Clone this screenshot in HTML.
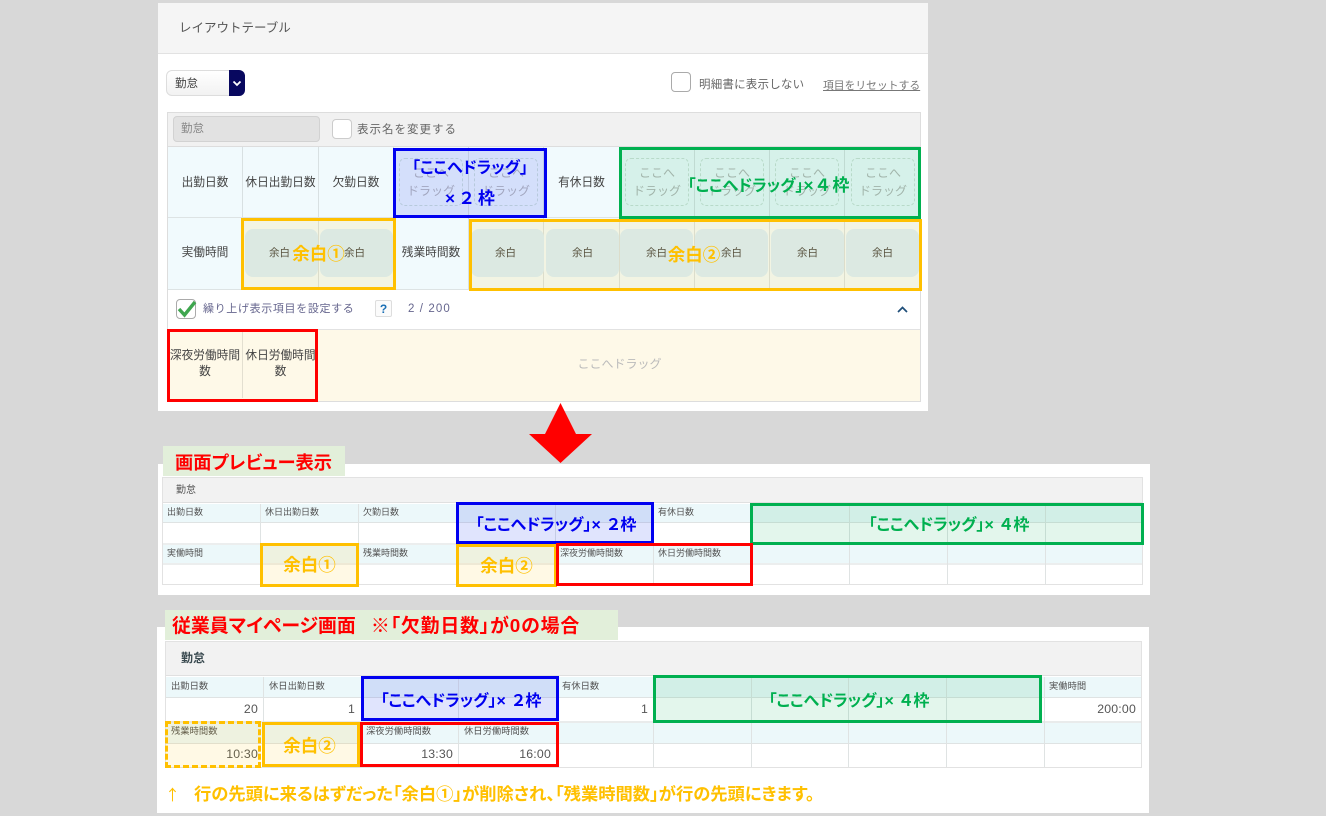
<!DOCTYPE html>
<html lang="ja"><head><meta charset="utf-8"><title>レイアウトテーブル</title>
<style>
html,body{margin:0;padding:0}
body{width:1326px;height:816px;background:#d8d8d8;position:relative;overflow:hidden;font-family:"Liberation Sans","Noto Sans CJK JP",sans-serif;font-size:11.7px;color:#444}
div{position:absolute;box-sizing:border-box}
.c{display:flex;align-items:center;justify-content:center;text-align:center;white-space:nowrap}
.t{white-space:nowrap;line-height:16px}
.cell{background:#f1fafd;border-right:1px solid #d8e0e2;border-bottom:1px solid #dde3e4;color:#444}
.r1{padding-bottom:2px}
.r2{padding-bottom:4px}
.drop{border:1px dashed #cfe0d8;border-radius:6px;color:#b5b5b5;line-height:18px;font-size:12px}
.blank{background:#d8eefc;border-radius:8px;color:#444;font-size:10.5px}
.o{border-style:solid;border-width:3px;display:flex;align-items:center;justify-content:center;font-weight:bold;white-space:nowrap;font-feature-settings:"palt"}
.bl{border-color:#0000f0;color:#0000f0;background:rgba(60,90,240,.16);font-size:16px}
.gr{border-color:#00b050;color:#00b050;background:rgba(0,176,80,.11);font-size:16px}
.ye{border-color:#ffc000;color:#ffc000;background:rgba(255,192,0,.1);font-size:17.5px}
.re{border-color:#f00}
.h{background:#ecf8fa}
.ln{background:#dfe3e3}
.lab{color:#555;font-size:9px;line-height:14px;white-space:nowrap}
.lab3{color:#555;font-size:9.3px;line-height:14px;white-space:nowrap}
.val{color:#555;font-size:12.3px;line-height:14px;text-align:right;white-space:nowrap;letter-spacing:.2px}
.tail{letter-spacing:1px}
</style></head><body>

<!-- panel 1 -->
<div style="left:158px;top:3px;width:770px;height:408px;background:#fff"></div>
<div style="left:158px;top:3px;width:770px;height:51px;background:#f5f5f5;border-bottom:1px solid #e2e2e2"></div>
<div class="t" style="left:179px;top:20px;font-size:12.5px;color:#555">レイアウトテーブル</div>

<div style="left:166px;top:70px;width:79px;height:26px;background:linear-gradient(#fff,#f2f2f2);border:1px solid #ddd;border-radius:6px"></div>
<div class="t" style="left:175px;top:76px;font-size:11.5px;color:#444">勤怠</div>
<div style="left:229px;top:70px;width:16px;height:26px;background:#08085f;border-radius:0 6px 6px 0"></div>
<svg style="position:absolute;left:232px;top:80px" width="10" height="7"><path d="M1.5 1.5L5 5L8.5 1.5" fill="none" stroke="#fff" stroke-width="1.8"/></svg>

<div style="left:671px;top:72px;width:20px;height:20px;background:#fff;border:1px solid #aaa;border-radius:4px"></div>
<div class="t" style="left:699px;top:77px;font-size:11.5px;color:#666;letter-spacing:.2px">明細書に表示しない</div>
<div class="t" style="left:823px;top:78px;font-size:10.8px;color:#777;text-decoration:underline">項目をリセットする</div>

<!-- config table -->
<div style="left:167px;top:112px;width:754px;height:290px;border:1px solid #ddd;background:#fff"></div>
<div style="left:168px;top:113px;width:752px;height:34px;background:#f1f1f1;border-bottom:1px solid #ddd"></div>
<div style="left:173px;top:116px;width:147px;height:26px;background:#e2e2e2;border:1px solid #d2d2d2;border-radius:4px"></div>
<div class="t" style="left:181px;top:121px;font-size:11.5px;color:#888">勤怠</div>
<div style="left:332px;top:119px;width:20px;height:20px;background:#fff;border:1px solid #ccc;border-radius:4px"></div>
<div class="t" style="left:357px;top:122px;font-size:11.5px;color:#666;letter-spacing:1px">表示名を変更する</div>

<!-- row 1 -->
<div class="cell c r1" style="left:168px;top:147px;width:75px;height:71px">出勤日数</div>
<div class="cell c r1" style="left:243px;top:147px;width:76px;height:71px">休日出勤日数</div>
<div class="cell c r1" style="left:319px;top:147px;width:75px;height:71px">欠勤日数</div>
<div class="cell" style="left:394px;top:147px;width:75px;height:71px"></div>
<div class="cell" style="left:469px;top:147px;width:75px;height:71px"></div>
<div class="cell c r1" style="left:544px;top:147px;width:76px;height:71px">有休日数</div>
<div class="cell" style="left:620px;top:147px;width:75px;height:71px"></div>
<div class="cell" style="left:695px;top:147px;width:75px;height:71px"></div>
<div class="cell" style="left:770px;top:147px;width:75px;height:71px"></div>
<div class="cell" style="left:845px;top:147px;width:75px;height:71px"></div>
<div class="drop c" style="left:399px;top:158px;width:64px;height:48px">ここへ<br>ドラッグ</div>
<div class="drop c" style="left:474px;top:158px;width:64px;height:48px">ここへ<br>ドラッグ</div>
<div class="drop c" style="left:625px;top:158px;width:64px;height:48px">ここへ<br>ドラッグ</div>
<div class="drop c" style="left:700px;top:158px;width:64px;height:48px">ここへ<br>ドラッグ</div>
<div class="drop c" style="left:775px;top:158px;width:64px;height:48px">ここへ<br>ドラッグ</div>
<div class="drop c" style="left:851px;top:158px;width:64px;height:48px">ここへ<br>ドラッグ</div>

<!-- row 2 -->
<div class="cell c r2" style="left:168px;top:218px;width:75px;height:72px">実働時間</div>
<div class="cell" style="left:243px;top:218px;width:76px;height:72px"></div>
<div class="cell" style="left:319px;top:218px;width:75px;height:72px"></div>
<div class="cell c r2" style="left:394px;top:218px;width:75px;height:72px">残業時間数</div>
<div class="cell" style="left:469px;top:218px;width:75px;height:72px"></div>
<div class="cell" style="left:544px;top:218px;width:76px;height:72px"></div>
<div class="cell" style="left:620px;top:218px;width:75px;height:72px"></div>
<div class="cell" style="left:695px;top:218px;width:75px;height:72px"></div>
<div class="cell" style="left:770px;top:218px;width:75px;height:72px"></div>
<div class="cell" style="left:845px;top:218px;width:75px;height:72px"></div>
<div class="blank c" style="left:245px;top:229px;width:73px;height:48px;padding:0 4px 2px 0">余白</div>
<div class="blank c" style="left:320px;top:229px;width:73px;height:48px;padding:0 4px 2px 0">余白</div>
<div class="blank c" style="left:471px;top:229px;width:73px;height:48px;padding:0 4px 2px 0">余白</div>
<div class="blank c" style="left:546px;top:229px;width:73px;height:48px;padding:0 0 2px 0">余白</div>
<div class="blank c" style="left:620px;top:229px;width:73px;height:48px;padding:0 0 2px 0">余白</div>
<div class="blank c" style="left:695px;top:229px;width:73px;height:48px;padding:0 0 2px 0">余白</div>
<div class="blank c" style="left:771px;top:229px;width:73px;height:48px;padding:0 0 2px 0">余白</div>
<div class="blank c" style="left:846px;top:229px;width:73px;height:48px;padding:0 0 2px 0">余白</div>

<!-- check row -->
<div style="left:176px;top:299px;width:20px;height:20px;background:#fff;border:1px solid #aaa;border-radius:4px"></div>
<svg style="position:absolute;left:176px;top:298px" width="22" height="22"><path d="M3 11L8.5 17L19 4" fill="none" stroke="#3fa64f" stroke-width="3.4"/></svg>
<div class="t" style="left:203px;top:301px;font-size:11px;color:#66668e;letter-spacing:.65px">繰り上げ表示項目を設定する</div>
<div class="c" style="left:375px;top:300px;width:17px;height:17px;border:1px solid #ddd;border-radius:2px;background:#fbfbfb;color:#1a6fb5;font-weight:bold;font-size:12px">?</div>
<div class="t" style="left:408px;top:301px;font-size:11.5px;color:#66668e;letter-spacing:1.1px">2 / 200</div>
<svg style="position:absolute;left:896px;top:305px" width="13" height="9"><path d="M2 7L6.5 2.5L11 7" fill="none" stroke="#1f4e79" stroke-width="1.7"/></svg>

<!-- bottom row -->
<div style="left:168px;top:329px;width:752px;height:72px;background:#fef9e8;border-top:1px solid #e2e2e2"></div>
<div class="c" style="left:168px;top:330px;width:75px;height:68px;border-right:1px solid #e3dfd0;line-height:16px;color:#444">深夜労働時間<br>数</div>
<div class="c" style="left:243px;top:330px;width:75px;height:68px;line-height:16px;color:#444">休日労働時間<br>数</div>
<div class="c" style="left:319px;top:330px;width:601px;height:66px;color:#bbb;font-size:12px">ここへドラッグ</div>

<!-- overlays panel 1 -->
<div class="o bl" style="left:393px;top:148px;width:154px;height:70px;line-height:30px;text-align:center;padding-top:2px"><span>「ここへドラッグ」<br><span style="font-size:17px;letter-spacing:5px;margin-left:5px">×２枠</span></span></div>
<div class="o gr" style="left:619px;top:147px;width:302px;height:72px"><span>「ここへドラッグ」<span style="font-size:17px;letter-spacing:3px">×４枠</span></span></div>
<div class="o ye" style="left:241px;top:218px;width:155px;height:72px;padding-bottom:1px">余白①</div>
<div class="o ye" style="left:469px;top:219px;width:453px;height:72px;padding-bottom:2px"><span style="margin-left:-3px">余白②</span></div>
<div class="o re" style="left:167px;top:329px;width:151px;height:73px"></div>

<!-- arrow -->
<svg style="position:absolute;left:525px;top:400px" width="72" height="66"><polygon points="35.5,3 51,34 67,34 35.5,63 4,34 20,34" fill="#f00"/></svg>

<!-- panel 2 -->
<div style="left:158px;top:464px;width:992px;height:131px;background:#fff"></div>
<div style="left:163px;top:446px;width:182px;height:30px;background:#e2efda"></div>
<div class="t" style="left:175px;top:453px;font-size:18.3px;line-height:20px;font-weight:bold;color:#f00;font-feature-settings:'palt'">画面プレビュー表示</div>

<div style="left:162px;top:477px;width:981px;height:108px;border:1px solid #e2e2e2;background:#fff"></div>
<div style="left:163px;top:478px;width:979px;height:25px;background:#f2f2f2;border-bottom:1px solid #e0e0e0"></div>
<div class="t" style="left:176px;top:485px;font-size:10px;line-height:12px;color:#555">勤怠</div>
<div class="h" style="left:163px;top:504px;width:979px;height:19px"></div>
<div class="h" style="left:163px;top:545px;width:979px;height:18px"></div>
<div class="ln" style="left:163px;top:522px;width:979px;height:1px"></div>
<div class="ln" style="left:163px;top:543px;width:979px;height:2px;opacity:.6"></div>
<div class="ln" style="left:163px;top:563px;width:979px;height:2px;opacity:.6"></div>
<div class="ln" style="left:260px;top:504px;width:1px;height:80px"></div>
<div class="ln" style="left:358px;top:504px;width:1px;height:80px"></div>
<div class="ln" style="left:456px;top:504px;width:1px;height:80px"></div>
<div class="ln" style="left:555px;top:504px;width:1px;height:80px"></div>
<div class="ln" style="left:653px;top:504px;width:1px;height:80px"></div>
<div class="ln" style="left:849px;top:504px;width:1px;height:80px"></div>
<div class="ln" style="left:947px;top:504px;width:1px;height:80px"></div>
<div class="ln" style="left:1045px;top:504px;width:1px;height:80px"></div>
<div class="lab" style="left:167px;top:505px">出勤日数</div>
<div class="lab" style="left:265px;top:505px">休日出勤日数</div>
<div class="lab" style="left:363px;top:505px">欠勤日数</div>
<div class="lab" style="left:658px;top:505px">有休日数</div>
<div class="lab" style="left:167px;top:546px">実働時間</div>
<div class="lab" style="left:363px;top:546px">残業時間数</div>
<div class="lab" style="left:560px;top:546px">深夜労働時間数</div>
<div class="lab" style="left:658px;top:546px">休日労働時間数</div>
<div class="o bl" style="left:456px;top:502px;width:198px;height:42px;padding:0 0 1px 3px"><span>「ここへドラッグ」<span class="tail">× ２枠</span></span></div>
<div class="o gr" style="left:750px;top:503px;width:394px;height:42px;padding:0 0 2px 5px"><span>「ここへドラッグ」<span class="tail">× ４枠</span></span></div>
<div class="o ye" style="left:260px;top:543px;width:99px;height:44px;padding-bottom:1px">余白①</div>
<div class="o ye" style="left:456px;top:544px;width:101px;height:43px;padding-bottom:1px">余白②</div>
<div class="o re" style="left:556px;top:543px;width:197px;height:43px"></div>

<!-- panel 3 -->
<div style="left:157px;top:627px;width:992px;height:186px;background:#fff"></div>
<div style="left:165px;top:610px;width:453px;height:30px;background:#e2efda"></div>
<div class="t" style="left:172px;top:616px;font-size:18.9px;line-height:21px;font-weight:bold;color:#f00;font-feature-settings:'palt'">従業員マイページ画面<span style="margin-left:15px;letter-spacing:.85px">※「欠勤日数」が0の場合</span></div>

<div style="left:165px;top:641px;width:977px;height:127px;border:1px solid #e2e2e2;background:#fff"></div>
<div style="left:166px;top:642px;width:975px;height:34px;background:#f2f2f2;border-bottom:1px solid #e0e0e0"></div>
<div class="t" style="left:181px;top:650px;font-size:12px;font-weight:bold;color:#3a4a50">勤怠</div>
<div class="h" style="left:166px;top:677px;width:975px;height:20px"></div>
<div class="h" style="left:166px;top:723px;width:975px;height:20px"></div>
<div class="ln" style="left:166px;top:697px;width:975px;height:1px"></div>
<div class="ln" style="left:166px;top:721px;width:975px;height:2px;opacity:.7"></div>
<div class="ln" style="left:166px;top:743px;width:975px;height:1px"></div>
<div class="ln" style="left:263px;top:677px;width:1px;height:90px"></div>
<div class="ln" style="left:361px;top:677px;width:1px;height:90px"></div>
<div class="ln" style="left:458px;top:677px;width:1px;height:90px"></div>
<div class="ln" style="left:557px;top:677px;width:1px;height:90px"></div>
<div class="ln" style="left:653px;top:677px;width:1px;height:90px"></div>
<div class="ln" style="left:751px;top:677px;width:1px;height:90px"></div>
<div class="ln" style="left:848px;top:677px;width:1px;height:90px"></div>
<div class="ln" style="left:946px;top:677px;width:1px;height:90px"></div>
<div class="ln" style="left:1044px;top:677px;width:1px;height:90px"></div>
<div class="lab3" style="left:171px;top:679px">出勤日数</div>
<div class="lab3" style="left:269px;top:679px">休日出勤日数</div>
<div class="lab3" style="left:562px;top:679px">有休日数</div>
<div class="lab3" style="left:1049px;top:679px">実働時間</div>
<div class="lab3" style="left:366px;top:724px">深夜労働時間数</div>
<div class="lab3" style="left:464px;top:724px">休日労働時間数</div>
<div class="lab3" style="left:171px;top:724px">残業時間数</div>
<div class="val" style="left:200px;top:702px;width:58px">20</div>
<div class="val" style="left:300px;top:702px;width:55px">1</div>
<div class="val" style="left:590px;top:702px;width:58px">1</div>
<div class="val" style="left:1070px;top:702px;width:66px">200:00</div>
<div class="val" style="left:190px;top:747px;width:68px">10:30</div>
<div class="val" style="left:385px;top:747px;width:68px">13:30</div>
<div class="val" style="left:483px;top:747px;width:68px">16:00</div>
<div style="left:165px;top:721px;width:96px;height:47px;border:3px dashed #ffc000;background:rgba(255,192,0,.1)"></div>
<div class="o bl" style="left:361px;top:676px;width:198px;height:45px;padding-left:3px"><span>「ここへドラッグ」<span class="tail">× ２枠</span></span></div>
<div class="o gr" style="left:653px;top:675px;width:389px;height:48px;padding:0 0 1px 4px"><span>「ここへドラッグ」<span class="tail">× ４枠</span></span></div>
<div class="o ye" style="left:262px;top:722px;width:98px;height:45px;padding-top:1px"><span style="margin-left:-3px">余白②</span></div>
<div class="o re" style="left:360px;top:722px;width:199px;height:45px"></div>

<div class="t" style="left:165px;top:784px;font-family:'Noto Sans CJK JP',sans-serif;font-size:15px;line-height:22px;color:#ffc000">↑</div>
<div class="t" style="left:194px;top:784px;font-size:17.3px;line-height:20px;font-weight:bold;color:#ffc000;font-feature-settings:'palt'">行の先頭に来るはずだった「余白①」が削除され、「残業時間数」が行の先頭にきます。</div>
</body></html>
